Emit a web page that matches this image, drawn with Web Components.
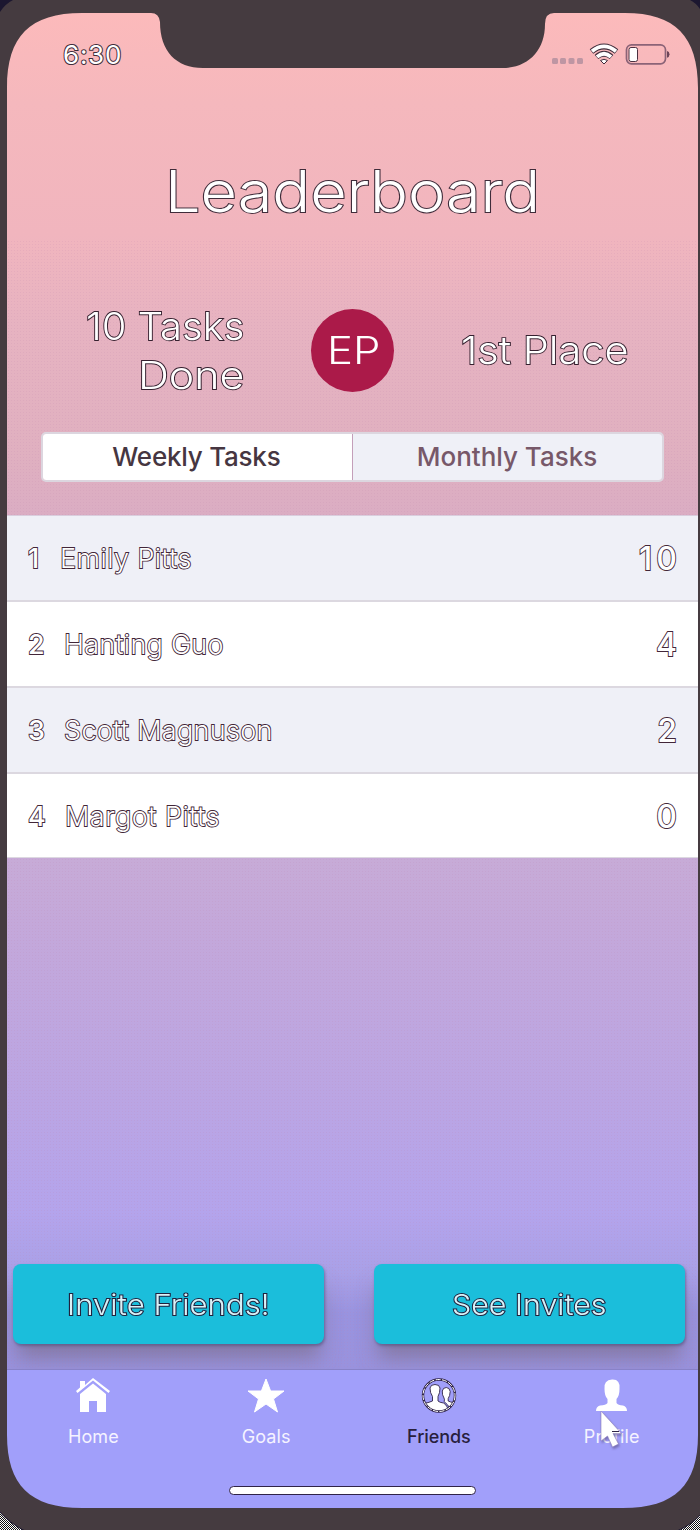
<!DOCTYPE html>
<html lang="en">
<head>
<meta charset="utf-8">
<title>Leaderboard</title>
<style>
html,body{margin:0;padding:0}
body{width:700px;height:1530px;overflow:hidden;font-family:Inter,"Liberation Sans",sans-serif;background:#453b40}
</style>
</head>
<body>
<phone-shell>
  <status-bar></status-bar>
  <page-title>Leaderboard</page-title>
  <score-summary></score-summary>
  <segment-control></segment-control>
  <section slot="list">
    <leader-row rank="1" name="Emily Pitts" points="10" nw="129" gap="15" pw="35" shade></leader-row>
    <leader-row rank="2" name="Hanting Guo" points="4" nw="157" gap="19" pw="20"></leader-row>
    <leader-row rank="3" name="Scott Magnuson" points="2" nw="206" gap="19" pw="18" shade></leader-row>
    <leader-row rank="4" name="Margot Pitts" points="0" nw="152" gap="20" pw="20" last></leader-row>
  </section>
  <action-button slot="actions"><fit-text stretch w="200">Invite Friends!</fit-text></action-button>
  <action-button slot="actions"><fit-text stretch w="152">See Invites</fit-text></action-button>
  <tab-bar slot="tabs"></tab-bar>
</phone-shell>
<script>
const define = (name, html, setup) => customElements.define(name, class extends HTMLElement {
  connectedCallback() {
    if (this.shadowRoot) return;
    const t = document.createElement('template');
    t.innerHTML = typeof html === 'function' ? html(this) : html;
    this.attachShadow({mode: 'open'}).append(t.content.cloneNode(true));
    if (setup) setup(this);
  }
});

define('phone-shell', `<style>
:host{display:block;position:relative;width:700px;height:1530px;box-sizing:border-box;padding:13px 2px 22px 7px;overflow:hidden}
.screen{height:1495px;display:flex;flex-direction:column;position:relative}
.bg{position:absolute;inset:13px 2px 22px 7px;background:linear-gradient(#fcbabb 0,#f5b8bd 90px,#f1b5be 220px,#e7b3c1 310px,#e0b0c0 440px,#dbadc3 500px,#c7abd7 846px,#c4a8da 910px,#bba5e3 1080px,#b4a4ec 1200px,#a9a0e7 1260px,#9993df 1300px,#9992dd 1356px)}
.dither{position:absolute;inset:240px 2px 160px 7px;background:radial-gradient(circle,#c086ae2b 0 .7px,transparent 1px) 0 0/3px 3px;pointer-events:none}
.list{height:343px;position:relative}
.actions{margin-top:406px;height:105px;padding:0 13px 0 6px;display:flex;justify-content:space-between;position:relative}
.tabs{position:relative;flex:1}
svg{position:absolute;inset:0;pointer-events:none}
</style>
<div class="bg"></div><div class="dither"></div>
<div class="screen"><slot></slot><div class="list"><slot name="list"></slot></div><div class="actions"><slot name="actions"></slot></div><div class="tabs"><slot name="tabs"></slot></div></div>
<svg width="700" height="1530">
<defs><pattern id="ck" width="2" height="2" patternUnits="userSpaceOnUse"><path fill="#fff" d="M0 0h2v2H0z"/><path fill="#111" d="M0 0h1v1H0zM1 1h1v1H1z"/></pattern></defs>
<path fill="#453b40" fill-rule="evenodd" d="M0 0H700V1530H0ZM7 88C7 36 30 13 82 13H151Q159 13 160 22C160 51 176 68 203 68H502C528 68 545 51 545 24Q545 13 554 13H625C675 13 698 36 698 88V1435C698 1485 675 1508 623 1508H82C30 1508 7 1485 7 1435Z"/>
<path fill="#1c1730" d="M0 0H13Q5 4 0 12ZM690 0H700V9Q696 3 690 0Z"/>
<path fill="url(#ck)" stroke="#1c1730" d="M-1 1511Q8 1522 25 1531H-1ZM701 1514Q693 1524 677 1531H701Z"/>
</svg>`);

define('status-bar', `<style>
:host{display:flex;height:84px;align-items:center;position:relative;padding:0 28px 0 56px;justify-content:space-between;box-sizing:border-box}
fit-text{font-size:26px;font-weight:400;color:#fff;-webkit-text-stroke:2px #3f2c3a;paint-order:stroke fill;line-height:84px}
svg{display:block;margin-top:-3px}
</style><fit-text w="56">6:30</fit-text>
<svg width="118" height="24" viewBox="552 42 118 24">
<g fill="#be96a3"><rect x="552" y="58" width="6" height="6" rx="1.5"/><rect x="560" y="58" width="6" height="6" rx="1.5"/><rect x="568.5" y="58" width="6" height="6" rx="1.5"/><rect x="577" y="58" width="6" height="6" rx="1.5"/></g>
<g fill="none" stroke="#3f2c3a" stroke-width="5.6"><path d="M591.500 51.500Q604 41.500 616.500 51.500"/><path d="M596.500 57Q604 50.500 611.500 57"/></g>
<g fill="none" stroke="#fff" stroke-width="3.8"><path d="M592 51.300Q604 41.500 616 51.300"/><path d="M597 56.800Q604 50.500 611 56.800"/></g>
<path fill="#fff" stroke="#3f2c3a" d="M600.500 60.500Q604 58 607.500 60.500L604 64Z"/>
<rect x="626.500" y="44.800" width="39" height="19" rx="5" fill="none" stroke="#8b6377" stroke-width="1.700"/>
<rect x="629" y="47.500" width="8.500" height="14" rx="2" fill="#fff" stroke="#4a3040"/>
<path fill="#6d4559" d="M667 51Q669.500 51.500 669.500 54.300T667 57.800Z"/>
</svg>`);

define('page-title', `<style>:host{display:flex;justify-content:center;height:188px;line-height:190px;font-size:57px;font-weight:300;color:#fff;-webkit-text-stroke:2px #3f2c3a;paint-order:stroke fill}</style><fit-text stretch w="370"><slot></slot></fit-text>`, el => {
  el.shadowRoot.querySelector('fit-text').textContent = el.textContent;
});

define('score-summary', `<style>
:host{display:grid;grid-template-columns:237px 217px 1fr;height:134px;box-sizing:border-box;padding-bottom:4px;align-items:center;font-size:38px;font-weight:300;color:#fff;line-height:48.5px}
.o{-webkit-text-stroke:1.800px #35202f;paint-order:stroke fill}
.done{display:flex;flex-direction:column;align-items:flex-end;padding-top:1px}
.avatar{justify-self:center;width:83px;height:83px;border-radius:50%;background:#ab1a49;display:grid;place-items:center}
.avatar fit-text{margin-left:3px}
</style><div class="done o"><fit-text stretch w="155">10 Tasks</fit-text><fit-text stretch w="103">Done</fit-text></div><div class="avatar"><fit-text stretch w="50">EP</fit-text></div><div class="o"><fit-text stretch w="164">1st Place</fit-text></div>`);

define('segment-control', `<style>
:host{display:flow-root;height:83px;margin-top:13px;padding:0 34px}
.box{height:50px;box-sizing:border-box;border:2px solid #dcd6df;border-radius:5px;overflow:hidden;display:grid;grid-template-columns:309px 1fr;font-size:26px;font-weight:500;line-height:46px;text-align:center}
.a{background:#fff;color:#463641;padding-right:2px}.b{background:#eff0f7;color:#775869;border-left:1px solid #c49fba;padding-right:1px}
</style><div class="box"><div class="a"><fit-text w="166">Weekly Tasks</fit-text></div><div class="b"><fit-text w="178">Monthly Tasks</fit-text></div></div>`);

define('leader-row', el => {
  const a = k => el.getAttribute(k);
  return `<style>
:host{display:flex;align-items:center;height:86px;box-sizing:border-box;background:#fff;border-bottom:2px solid #dcd8e0;padding:1px 21px 0 21px;color:#fff;-webkit-text-stroke:1.800px #422638;paint-order:stroke fill}
:host([shade]){background:#eff0f7}
:host([rank="1"]){border-top:1px solid #d9cddd;height:87px}
:host([last]){height:84px;border-bottom-width:1px}
.rank{width:19px;font-size:27px;font-weight:500}.name{font-size:27px;font-weight:300;flex:1;padding-left:var(--g)}
.points{font-size:32px;font-weight:500}
</style><div class="rank">${a('rank')}</div><div class="name" style="--g:${+a('gap') - 2}px"><fit-text w="${a('nw')}">${a('name')}</fit-text></div><div class="points"><fit-text w="${a('pw')}">${a('points')}</fit-text></div>`;
});

define('action-button', `<style>:host{display:grid;place-items:center;width:311px;height:80px;border-radius:8px;background:#1bbedb;box-shadow:1px 2px 3px #514c7899,0 18px 20px -4px #6f606e80;font-size:28px;font-weight:300;color:#d9f2f8;-webkit-text-stroke:2px #20223e;paint-order:stroke fill;line-height:83px}</style><slot></slot>`);

define('tab-item', `<style>:host{display:flex;flex-direction:column;align-items:center;height:82px;font-size:18px;line-height:24px;color:#f5f3ff}
::slotted(svg){display:block;margin:8px 0 11px;overflow:visible}
:host([active]){color:#28203d;font-weight:500}</style><slot></slot>`);

define('tab-bar', `<style>
:host{display:block;height:139px;box-sizing:border-box;border-top:1px solid #8882c8;background:#a19ffa;position:relative}
.tabs{display:grid;grid-template-columns:repeat(4,1fr);height:82px}
.home{width:247px;height:9px;box-sizing:border-box;border:1px solid #302447;border-radius:5px;background:#fff;margin:34px auto 0}
.cursor{position:absolute;left:592px;top:39px}
</style><div class="tabs">
<tab-item><svg width="34" height="36" viewBox="76 1378 34 36"><path fill="#fff" d="M80 1381h5v4l8-7 17 13-1.500 2L93 1380.500 77.500 1393 76 1391l4-3.500ZM80 1394l13-10.500L106 1394V1412H97V1401H89V1412H80Z"/></svg><fit-text w="49">Home</fit-text></tab-item>
<tab-item><svg width="38" height="36" viewBox="247 1378 38 36"><path fill="#fff" stroke="#fff" stroke-linejoin="round" d="M266 1379L270.600 1391H284L273.500 1399 277.500 1412 266 1404 254.500 1412 258.500 1399 248 1391H261.400Z"/></svg><fit-text w="47">Goals</fit-text></tab-item>
<tab-item active><svg width="36" height="36" viewBox="420.500 1378 36 36"><defs><clipPath id="c"><circle cx="438.500" cy="1395.500" r="16.500"/></clipPath></defs><g clip-path="url(#c)" fill="#fff" stroke="#302447" stroke-width=".9"><path d="M443.500 1401.500Q444.500 1400 443.500 1398Q441.500 1395 441.800 1391Q442.500 1387.500 445.800 1387.500T449.700 1391.500Q449.500 1396 447.700 1398.500V1401Q449 1402 455 1403V1412L450 1409Q447 1404 443.500 1401.500Z"/><path d="M420 1414V1403.500Q429 1403 432 1401V1396.500Q429.500 1393 429.500 1388Q430 1384.500 434.500 1384.500T439.500 1388Q439.500 1393 437.500 1396.500V1401Q439 1402.500 443 1403Q447 1405 449 1414Z"/></g><circle cx="438.500" cy="1395.500" r="16" fill="none" stroke="#302447" stroke-width="2.400"/><circle cx="438.500" cy="1395.500" r="16" fill="none" stroke="#fff" stroke-width="1" stroke-dasharray="5 1.500"/></svg><fit-text w="62">Friends</fit-text></tab-item>
<tab-item><svg width="32" height="36" viewBox="596 1378 32 36"><path fill="#fff" d="M604.500 1389Q603.500 1380 612 1379.500T619.500 1389Q619.500 1396 616.500 1399V1403Q618 1405 623 1405.500Q627 1406.500 627 1411H596Q596 1406.500 600 1405.500Q606 1405 607.500 1403V1399Q604.500 1396 604.500 1389Z"/></svg><fit-text w="54">Profile</fit-text></tab-item>
</div><div class="home"></div>
<svg class="cursor" width="28" height="42" viewBox="599 1409 28 42"><path fill="#fff" stroke="#8d80bd" stroke-width=".6" d="M601 1411V1441L607.500 1436 612.500 1447 618.500 1444 613 1433.500H621.500Z" style="filter:drop-shadow(1px 2px 1px #51467b88)"/><path d="M612 1431.500H619" stroke="#302447"/></svg>`);

// Fits a line of text to the width in "w": by tracking, or by widening the letters when "stretch" is set.
// Registered last so that every host around it already passes down its font.
define('fit-text', `<style>:host{display:inline-block;white-space:nowrap}span{display:inline-block;transform-origin:0 50%}</style><span><slot></slot></span>`, el => {
  const span = el.shadowRoot.querySelector('span');
  const target = +el.getAttribute('w'), n = el.textContent.length;
  const size = parseFloat(getComputedStyle(el).fontSize);
  const width = span.getBoundingClientRect().width;
  const bearing = size * 0.09;
  if (el.hasAttribute('stretch')) {
    el.style.width = target + bearing + 'px';
    span.style.transform = `scaleX(${(target + bearing) / width})`;
  } else if (n > 1) {
    const ls = (target + bearing - width) / (n - 1);
    span.style.letterSpacing = ls + 'px';
    span.style.marginRight = -ls + 'px';
  }
});
</script>
</body>
</html>
